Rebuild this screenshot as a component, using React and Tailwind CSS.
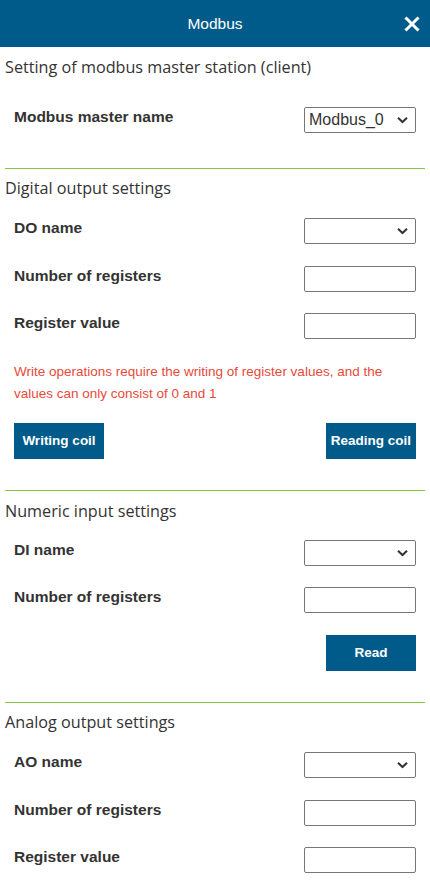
import React from 'react';

const Chevron = () => (
  <svg width="11" height="7" viewBox="0 0 11 7" className="absolute right-[7px] top-1/2 -translate-y-1/2">
    <path d="M1 1.2 L5.5 5.5 L10 1.2" fill="none" stroke="#333" strokeWidth="2" />
  </svg>
);

const Field = ({ select, value }) => (
  <div className="relative w-[112px] h-[26px] border border-[#767676] rounded-[2px] bg-white flex items-center pl-[4px] text-[16px] text-[#333]">
    {value}
    {select && <Chevron />}
  </div>
);

const Row = ({ label, select, value }) => (
  <div className="flex items-start justify-between px-[9px]">
    <span className="text-[15.5px] leading-[20px] font-bold text-[#333]">{label}</span>
    <Field select={select} value={value} />
  </div>
);

const Title = ({ children, className = '' }) => (
  <h2 className={`font-['Open_Sans',sans-serif] text-[16.2px] leading-[20px] text-[#333] ${className}`}>{children}</h2>
);

const Divider = () => <div className="h-px bg-[#8cc63f]" />;

const Button = ({ children }) => (
  <button className="w-[90px] h-[36px] bg-[#005b8a] text-white font-bold text-[13.5px]">{children}</button>
);

export default function App() {
  return (
    <div className="w-[430px] min-h-[890px] bg-white font-['Liberation_Sans',Arial,sans-serif]">
      {/* Header */}
      <div className="relative h-[47px] bg-[#005b8a] flex items-center justify-center">
        <span className="text-white text-[15.5px]">Modbus</span>
        <button className="absolute right-[10px] top-1/2 -translate-y-1/2">
          <svg width="16" height="16" viewBox="0 0 16 16">
            <path d="M2.5 2.5 L13.5 13.5 M13.5 2.5 L2.5 13.5" stroke="#fff" strokeWidth="3" strokeLinecap="square" />
          </svg>
        </button>
      </div>

      <div className="px-[5px]">
        {/* Master station */}
        <Title className="mt-[10px]">Setting of modbus master station (client)</Title>
        <div className="mt-[30px] mb-[35px]">
          <Row label="Modbus master name" select value="Modbus_0" />
        </div>
        <Divider />

        {/* Digital output */}
        <Title className="mt-[9px]">Digital output settings</Title>
        <div className="mt-[20px] flex flex-col gap-[21.5px]">
          <Row label="DO name" select />
          <Row label="Number of registers" />
          <Row label="Register value" />
        </div>
        <p className="mt-[21.5px] pl-[9px] pr-[35px] text-[13.5px] leading-[22px] text-[#e84a3a]">
          Write operations require the writing of register values, and the values can only consist of 0 and 1
        </p>
        <div className="mt-[18.5px] mb-[31px] px-[9px] flex justify-between">
          <Button>Writing coil</Button>
          <Button>Reading coil</Button>
        </div>
        <Divider />

        {/* Numeric input */}
        <Title className="mt-[10px]">Numeric input settings</Title>
        <div className="mt-[19px] flex flex-col gap-[21px]">
          <Row label="DI name" select />
          <Row label="Number of registers" />
        </div>
        <div className="mt-[22px] mb-[31px] px-[9px] flex justify-end">
          <Button>Read</Button>
        </div>
        <Divider />

        {/* Analog output */}
        <Title className="mt-[9px]">Analog output settings</Title>
        <div className="mt-[20px] flex flex-col gap-[21.5px]">
          <Row label="AO name" select />
          <Row label="Number of registers" />
          <Row label="Register value" />
        </div>
      </div>
    </div>
  );
}
